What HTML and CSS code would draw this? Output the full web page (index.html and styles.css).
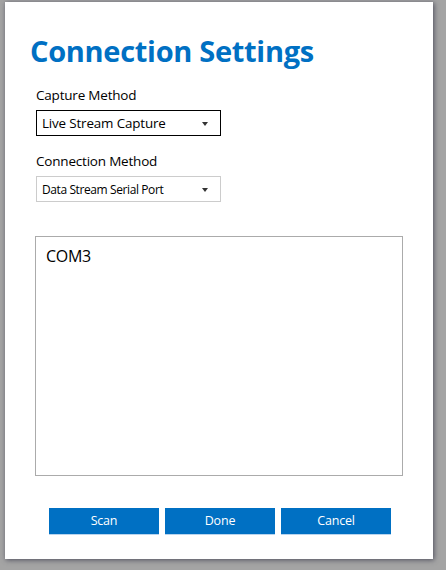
FILE: index.html
```html
<!DOCTYPE html>
<html>
<head>
<meta charset="utf-8">
<link rel="stylesheet" href="styles.css">
</head>
<body>
<div class="window">
  <h1 class="title">Connection Settings</h1>
  <div class="field">
    <div class="label">Capture Method</div>
    <div class="select select-focus"><span class="select-text">Live Stream Capture</span><span class="arrow"></span></div>
  </div>
  <div class="field field-second">
    <div class="label">Connection Method</div>
    <div class="select"><span class="select-text small">Data Stream Serial Port</span><span class="arrow"></span></div>
  </div>
  <div class="listbox">
    <div class="list-item">COM3</div>
  </div>
  <div class="buttons">
    <div class="btn">Scan</div>
    <div class="btn">Done</div>
    <div class="btn">Cancel</div>
  </div>
</div>
</body>
</html>
```
FILE: styles.css
```css
html, body {
  margin: 0;
  padding: 0;
  background: #a4a4a4;
  width: 446px;
  height: 570px;
  overflow: hidden;
}
.window {
  box-sizing: border-box;
  margin: 2px 0 0 5px;
  width: 428px;
  height: 557px;
  background: #ffffff;
  box-shadow: 1px 1px 5px rgba(40, 40, 60, 0.7);
  padding: 0 0 0 30px;
  font-family: "Open Sans", "Noto Sans", sans-serif;
  color: #000;
}
.title {
  margin: 0 0 0 -5px;
  padding-top: 27px;
  height: 44px;
  font-size: 29px;
  line-height: 44px;
  font-weight: 700;
  color: #0070c3;
  letter-spacing: -0.3px;
}
.field {
  padding-left: 1px;
  margin-top: 12px;
}
.field-second {
  margin-top: 15px;
}
.label {
  font-size: 13.5px;
  line-height: 20px;
  height: 20px;
  letter-spacing: -0.2px;
}
.select {
  box-sizing: border-box;
  margin-top: 5px;
  width: 185px;
  height: 26px;
  border: 1px solid #cccccc;
  display: flex;
  align-items: center;
  justify-content: space-between;
  padding: 0 12px 0 5px;
}
.select-focus {
  border-color: #000000;
}
.select-text {
  font-size: 13.4px;
  letter-spacing: -0.15px;
}
.select-text.small {
  font-size: 12px;
  letter-spacing: -0.4px;
}
.arrow {
  width: 0;
  height: 0;
  border-left: 3px solid transparent;
  border-right: 3px solid transparent;
  border-top: 4px solid #333;
  margin-top: 1px;
}
.listbox {
  box-sizing: border-box;
  margin-top: 34px;
  width: 368px;
  height: 240px;
  border: 1px solid #ababab;
  padding: 7px 0 0 10px;
}
.list-item {
  font-size: 16px;
  line-height: 24px;
  letter-spacing: -0.3px;
}
.buttons {
  display: flex;
  gap: 6px;
  margin-top: 32px;
  padding-left: 14px;
}
.btn {
  box-sizing: border-box;
  width: 110px;
  height: 27px;
  background: #0070c3;
  border-bottom: 1px solid #b8d4ee;
  color: #fff;
  font-size: 12.5px;
  line-height: 26px;
  text-align: center;
  letter-spacing: -0.2px;
}
```
